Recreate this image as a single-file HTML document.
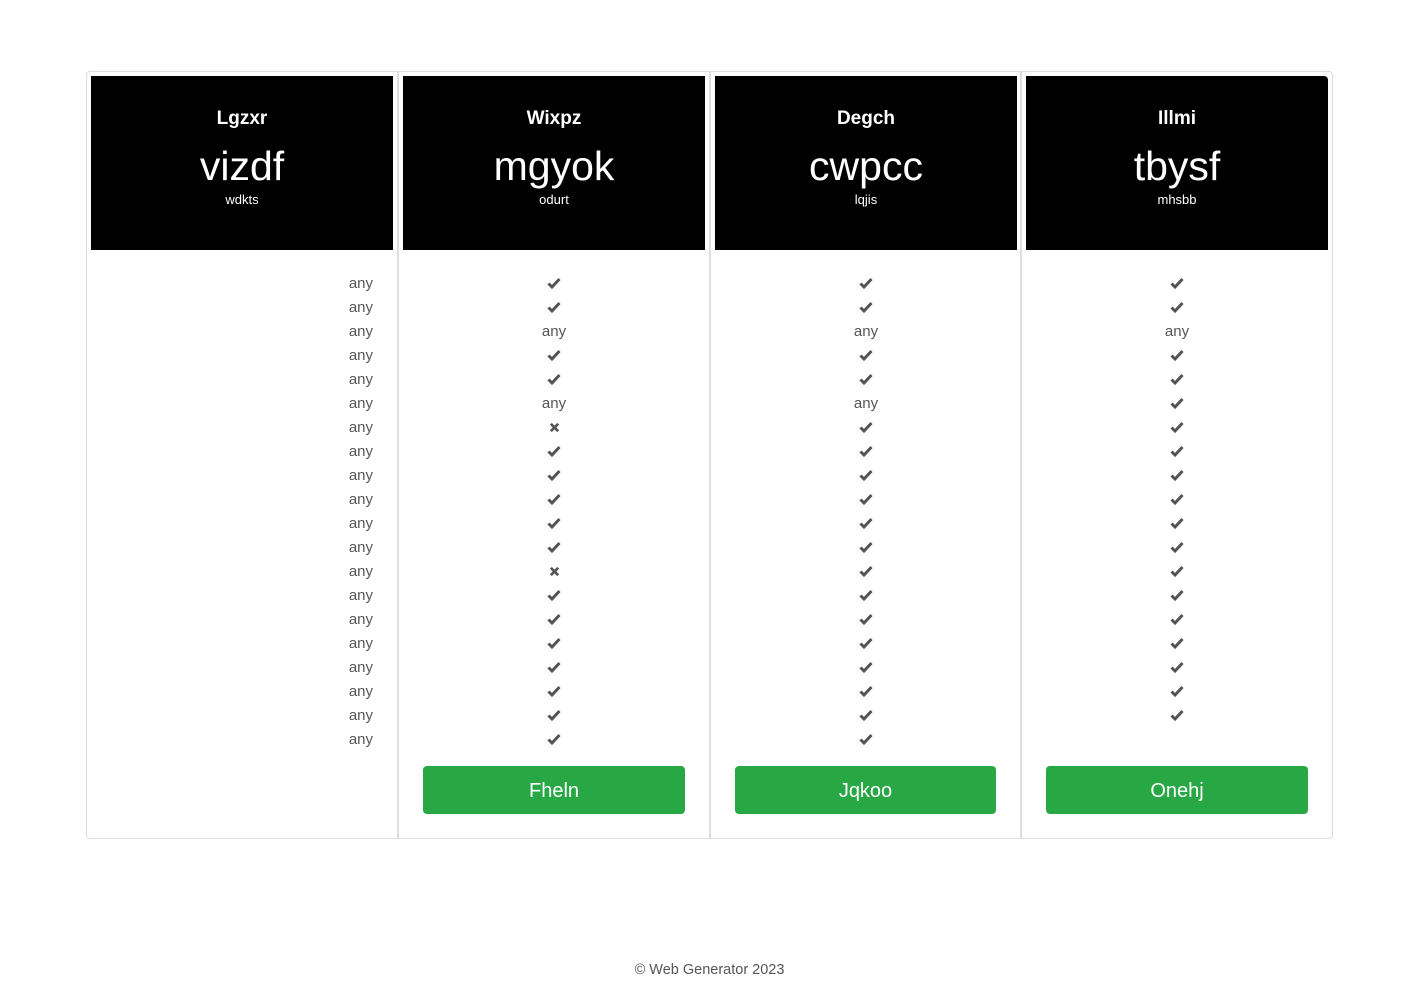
<!DOCTYPE html>
<html><head><meta charset="utf-8"><style>
*{margin:0;padding:0;box-sizing:border-box}
body{width:1419px;height:982px;background:#fff;font-family:"Liberation Sans",sans-serif;position:relative;overflow:hidden}
.outer{position:absolute;left:86px;top:71px;width:1247px;height:768px;border:1px solid #dedede;border-radius:4px}
.sep{position:absolute;top:72px;width:2px;height:766px;background:#dedede}
.hd{position:absolute;top:76px;height:174px;background:#000;color:#fff;text-align:center}
.t{position:absolute;left:0;right:0;top:32px;font-size:19px;font-weight:bold}
.b{position:absolute;left:0;right:0;top:67px;font-size:41px;line-height:46px}
.s{position:absolute;left:0;right:0;top:116px;font-size:13px}
.col{position:absolute;top:272px;text-align:center;color:#555;font-size:15px}
.col div{height:24px;line-height:24px}
.col svg{position:relative;top:-1px}
.c1{text-align:right}
svg{vertical-align:middle}
.btn{position:absolute;top:766px;height:48px;background:#28a745;border-radius:4px;color:#fff;font-size:20px;text-align:center;line-height:51px}
.foot{position:absolute;top:962px;left:0;width:1419px;text-align:center;font-size:14.5px;color:#555}
</style></head><body>
<div class="outer"></div>
<div class="sep" style="left:397px"></div>
<div class="sep" style="left:709px"></div>
<div class="sep" style="left:1020px"></div>

<div class="hd" style="left:91px;width:302px"><div class="t">Lgzxr</div><div class="b">vizdf</div><div class="s">wdkts</div></div>
<div class="hd" style="left:403px;width:302px"><div class="t">Wixpz</div><div class="b">mgyok</div><div class="s">odurt</div></div>
<div class="hd" style="left:715px;width:302px"><div class="t">Degch</div><div class="b">cwpcc</div><div class="s">lqjis</div></div>
<div class="hd" style="left:1026px;width:302px;border-top-right-radius:4px"><div class="t">Illmi</div><div class="b">tbysf</div><div class="s">mhsbb</div></div>

<div class="col c1" style="left:91px;width:282px">
<div>any</div><div>any</div><div>any</div><div>any</div><div>any</div><div>any</div><div>any</div><div>any</div><div>any</div><div>any</div><div>any</div><div>any</div><div>any</div><div>any</div><div>any</div><div>any</div><div>any</div><div>any</div><div>any</div><div>any</div>
</div>

<svg width="0" height="0" style="position:absolute"><defs>
<symbol id="ck" viewBox="0 0 14 12"><path d="M1.5 6.5 L5 10 L12.5 2" fill="none" stroke="#555" stroke-width="3"/></symbol>
<symbol id="x" viewBox="0 0 12 12"><path d="M2 2 L10 10 M10 2 L2 10" fill="none" stroke="#555" stroke-width="3"/></symbol>
</defs></svg>

<div class="col" style="left:403px;width:302px">
<div><svg width="14" height="12"><use href="#ck"/></svg></div>
<div><svg width="14" height="12"><use href="#ck"/></svg></div>
<div>any</div>
<div><svg width="14" height="12"><use href="#ck"/></svg></div>
<div><svg width="14" height="12"><use href="#ck"/></svg></div>
<div>any</div>
<div><svg width="11" height="11"><use href="#x"/></svg></div>
<div><svg width="14" height="12"><use href="#ck"/></svg></div>
<div><svg width="14" height="12"><use href="#ck"/></svg></div>
<div><svg width="14" height="12"><use href="#ck"/></svg></div>
<div><svg width="14" height="12"><use href="#ck"/></svg></div>
<div><svg width="14" height="12"><use href="#ck"/></svg></div>
<div><svg width="11" height="11"><use href="#x"/></svg></div>
<div><svg width="14" height="12"><use href="#ck"/></svg></div>
<div><svg width="14" height="12"><use href="#ck"/></svg></div>
<div><svg width="14" height="12"><use href="#ck"/></svg></div>
<div><svg width="14" height="12"><use href="#ck"/></svg></div>
<div><svg width="14" height="12"><use href="#ck"/></svg></div>
<div><svg width="14" height="12"><use href="#ck"/></svg></div>
<div><svg width="14" height="12"><use href="#ck"/></svg></div>
</div>

<div class="col" style="left:715px;width:302px">
<div><svg width="14" height="12"><use href="#ck"/></svg></div>
<div><svg width="14" height="12"><use href="#ck"/></svg></div>
<div>any</div>
<div><svg width="14" height="12"><use href="#ck"/></svg></div>
<div><svg width="14" height="12"><use href="#ck"/></svg></div>
<div>any</div>
<div><svg width="14" height="12"><use href="#ck"/></svg></div>
<div><svg width="14" height="12"><use href="#ck"/></svg></div>
<div><svg width="14" height="12"><use href="#ck"/></svg></div>
<div><svg width="14" height="12"><use href="#ck"/></svg></div>
<div><svg width="14" height="12"><use href="#ck"/></svg></div>
<div><svg width="14" height="12"><use href="#ck"/></svg></div>
<div><svg width="14" height="12"><use href="#ck"/></svg></div>
<div><svg width="14" height="12"><use href="#ck"/></svg></div>
<div><svg width="14" height="12"><use href="#ck"/></svg></div>
<div><svg width="14" height="12"><use href="#ck"/></svg></div>
<div><svg width="14" height="12"><use href="#ck"/></svg></div>
<div><svg width="14" height="12"><use href="#ck"/></svg></div>
<div><svg width="14" height="12"><use href="#ck"/></svg></div>
<div><svg width="14" height="12"><use href="#ck"/></svg></div>
</div>

<div class="col" style="left:1026px;width:302px">
<div><svg width="14" height="12"><use href="#ck"/></svg></div>
<div><svg width="14" height="12"><use href="#ck"/></svg></div>
<div>any</div>
<div><svg width="14" height="12"><use href="#ck"/></svg></div>
<div><svg width="14" height="12"><use href="#ck"/></svg></div>
<div><svg width="14" height="12"><use href="#ck"/></svg></div>
<div><svg width="14" height="12"><use href="#ck"/></svg></div>
<div><svg width="14" height="12"><use href="#ck"/></svg></div>
<div><svg width="14" height="12"><use href="#ck"/></svg></div>
<div><svg width="14" height="12"><use href="#ck"/></svg></div>
<div><svg width="14" height="12"><use href="#ck"/></svg></div>
<div><svg width="14" height="12"><use href="#ck"/></svg></div>
<div><svg width="14" height="12"><use href="#ck"/></svg></div>
<div><svg width="14" height="12"><use href="#ck"/></svg></div>
<div><svg width="14" height="12"><use href="#ck"/></svg></div>
<div><svg width="14" height="12"><use href="#ck"/></svg></div>
<div><svg width="14" height="12"><use href="#ck"/></svg></div>
<div><svg width="14" height="12"><use href="#ck"/></svg></div>
<div><svg width="14" height="12"><use href="#ck"/></svg></div>
</div>

<div class="btn" style="left:423px;width:262px">Fheln</div>
<div class="btn" style="left:735px;width:261px">Jqkoo</div>
<div class="btn" style="left:1046px;width:262px">Onehj</div>

<div class="foot">© Web Generator 2023</div>
</body></html>
